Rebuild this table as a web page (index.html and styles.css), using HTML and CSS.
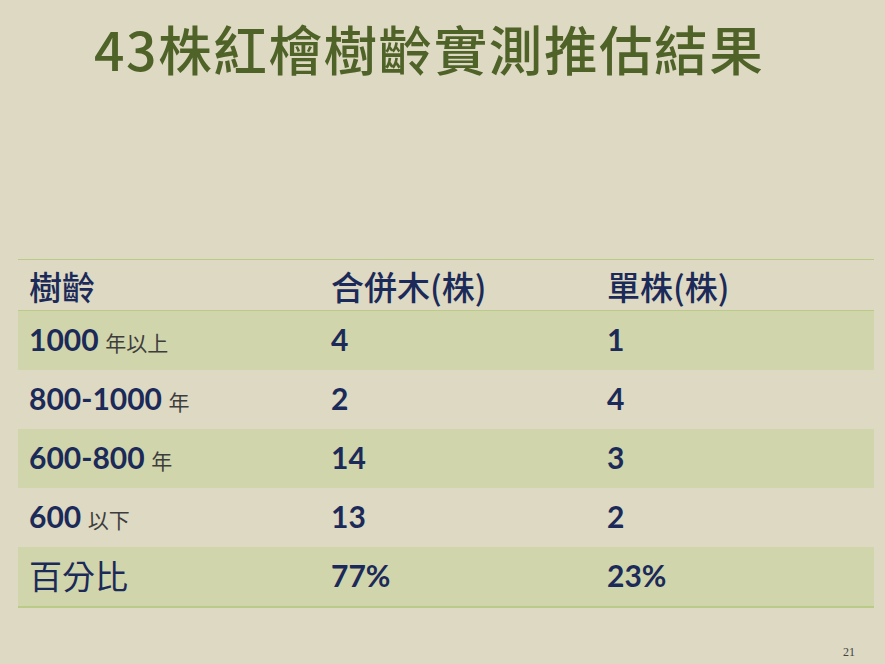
FILE: index.html
```html
<!DOCTYPE html>
<html>
<head>
<meta charset="utf-8">
<link rel="stylesheet" href="styles.css">
</head>
<body>
<div class="slide">
  <h1 class="title">43株紅檜樹齡實測推估結果</h1>
  <div class="table">
    <div class="row head">
      <div class="cell c1">樹齡</div>
      <div class="cell c2">合併木(株)</div>
      <div class="cell c3">單株(株)</div>
    </div>
    <div class="row shade">
      <div class="cell c1"><b class="num">1000</b> <span class="unit">年以上</span></div>
      <div class="cell c2"><b class="num">4</b></div>
      <div class="cell c3"><b class="num">1</b></div>
    </div>
    <div class="row">
      <div class="cell c1"><b class="num">800-1000</b> <span class="unit">年</span></div>
      <div class="cell c2"><b class="num">2</b></div>
      <div class="cell c3"><b class="num">4</b></div>
    </div>
    <div class="row shade">
      <div class="cell c1"><b class="num">600-800</b> <span class="unit">年</span></div>
      <div class="cell c2"><b class="num">14</b></div>
      <div class="cell c3"><b class="num">3</b></div>
    </div>
    <div class="row">
      <div class="cell c1"><b class="num">600</b> <span class="unit">以下</span></div>
      <div class="cell c2"><b class="num">13</b></div>
      <div class="cell c3"><b class="num">2</b></div>
    </div>
    <div class="row shade last">
      <div class="cell c1 pct">百分比</div>
      <div class="cell c2"><b class="num">77%</b></div>
      <div class="cell c3"><b class="num">23%</b></div>
    </div>
  </div>
  <div class="page">21</div>
</div>
</body>
</html>
```
FILE: styles.css
```css
html, body {
  margin: 0;
  padding: 0;
}
body {
  background: #ddd9c3;
  width: 885px;
  height: 664px;
  overflow: hidden;
}
.slide {
  width: 885px;
  height: 664px;
  display: flex;
  flex-direction: column;
  font-family: "Noto Sans CJK TC", "Noto Sans", sans-serif;
}
.title {
  margin: 13px 0 0 94px;
  font-size: 53.5px;
  line-height: 70px;
  font-weight: 500;
  color: #4f6228;
  letter-spacing: 1.6px;
}
.table {
  margin: 176px 11px 0 18px;
  display: flex;
  flex-direction: column;
  border-top: 1.5px solid #b9cb86;
}
.row {
  display: grid;
  grid-template-columns: 302px 276px 1fr;
  height: 59px;
  align-items: center;
  color: #1b2a58;
}
.row.head {
  height: 50px;
  border-bottom: 1.5px solid #b9cb86;
  font-size: 33px;
  font-weight: 500;
}
.row.shade {
  background: #d1d5ab;
}
.row.last {
  border-bottom: 2px solid #b9cb86;
}
.cell {
  padding-left: 11px;
  padding-bottom: 4px;
  white-space: nowrap;
}
.head .cell {
  padding-top: 2px;
  padding-bottom: 0;
  line-height: 40px;
}
.num {
  font-family: "Lato", "Open Sans", sans-serif;
  font-weight: 700;
  font-size: 30px;
  color: #1b2a58;
}
.unit {
  font-size: 21px;
  color: #3d3d3d;
  margin-left: 3px;
}
.pct {
  font-size: 33px;
  padding-left: 11px;
  line-height: 40px;
  padding-bottom: 4px;
}
.page {
  margin: auto 30px 4px auto;
  font-family: "Liberation Serif", serif;
  font-size: 12px;
  color: #444;
}
```
